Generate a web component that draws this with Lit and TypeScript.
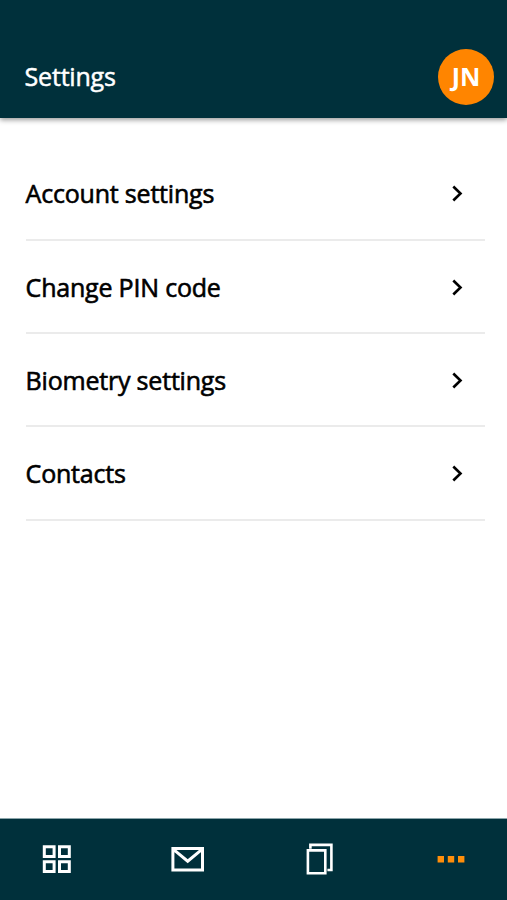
import { LitElement, html, css, svg } from "lit";
import { customElement } from "lit/decorators.js";

const icons = [
  svg`<path stroke-width="3" d="M4.3 4.8h9.8v9.8H4.3zM19.5 4.8h9.8v9.8h-9.8zM4.3 19.8h9.8v9.8H4.3zM19.5 19.8h9.8v9.8h-9.8z"/>`,
  svg`<path stroke-width="3" d="M1.9 6.6h29.6v21.4H1.9zM2.7 7.6l14 11.6L30.7 7.6"/>`,
  svg`<path stroke-width="2.6" d="M4.9 8.4h17.4v22.8H4.9zM7.4 6.7V2.9h21v25.1h-4"/>`,
  svg`<path class="dots" d="M3.6 14.1h6.4v6.4H3.6zM13.8 14.1h6.4v6.4h-6.4zM24 14.1h6.4v6.4H24z"/>`,
];
const entries = ["Account settings", "Change PIN code", "Biometry settings", "Contacts"];

@customElement("app-root")
export class AppRoot extends LitElement {
  static styles = css`
    :host { display: flex; flex-direction: column; height: 900px; background: #fff; font-family: "Open Sans", sans-serif; color: #000; }
    header { box-sizing: border-box; height: 118px; padding: 36px 13px 0 24.6px; background: #00303b; color: #fff; display: flex; align-items: center; justify-content: space-between; box-shadow: 0 2px 5px rgba(0,0,0,.4); }
    h1 { margin: 0 0 2px; font-size: 25px; line-height: 34px; font-weight: 400; letter-spacing: -.2px; -webkit-text-stroke: .5px #fff; }
    .avatar { box-sizing: border-box; width: 56px; height: 56px; padding-bottom: 2px; border-radius: 50%; background: #ff8500; display: grid; place-items: center; font-size: 25px; font-weight: 700; }
    main { flex: 1; padding: 29.6px 22px 0 25.6px; }
    .row { box-sizing: border-box; height: 93.3px; border-bottom: 2px solid #ebebeb; display: flex; align-items: center; justify-content: space-between; padding-right: 20px; font-size: 25px; font-weight: 400; letter-spacing: -.2px; -webkit-text-stroke: .6px #000; }
    svg { display: block; fill: none; stroke: #fff; }
    .row svg { stroke: #000; stroke-width: 2.6; }
    .dots { fill: #ff8e0a; stroke: none; }
    nav { box-sizing: border-box; height: 82px; border-top: 1px solid #8ba5aa; padding: 1px 38.7px 0 39.7px; background: #00303b; display: flex; align-items: center; justify-content: space-between; }
  `;
  render() {
    return html`<header><h1>Settings</h1><div class="avatar">JN</div></header>
      <main>${entries.map(
        (t) => html`<div class="row"><span>${t}</span><svg width="16" height="18" viewBox="0 0 16 18"><path d="M4.3 2.5l7.2 7-7.2 7"/></svg></div>`
      )}</main>
      <nav>${icons.map((i) => html`<svg width="34" height="36" viewBox="0 0 34 36">${i}</svg>`)}</nav>`;
  }
}
